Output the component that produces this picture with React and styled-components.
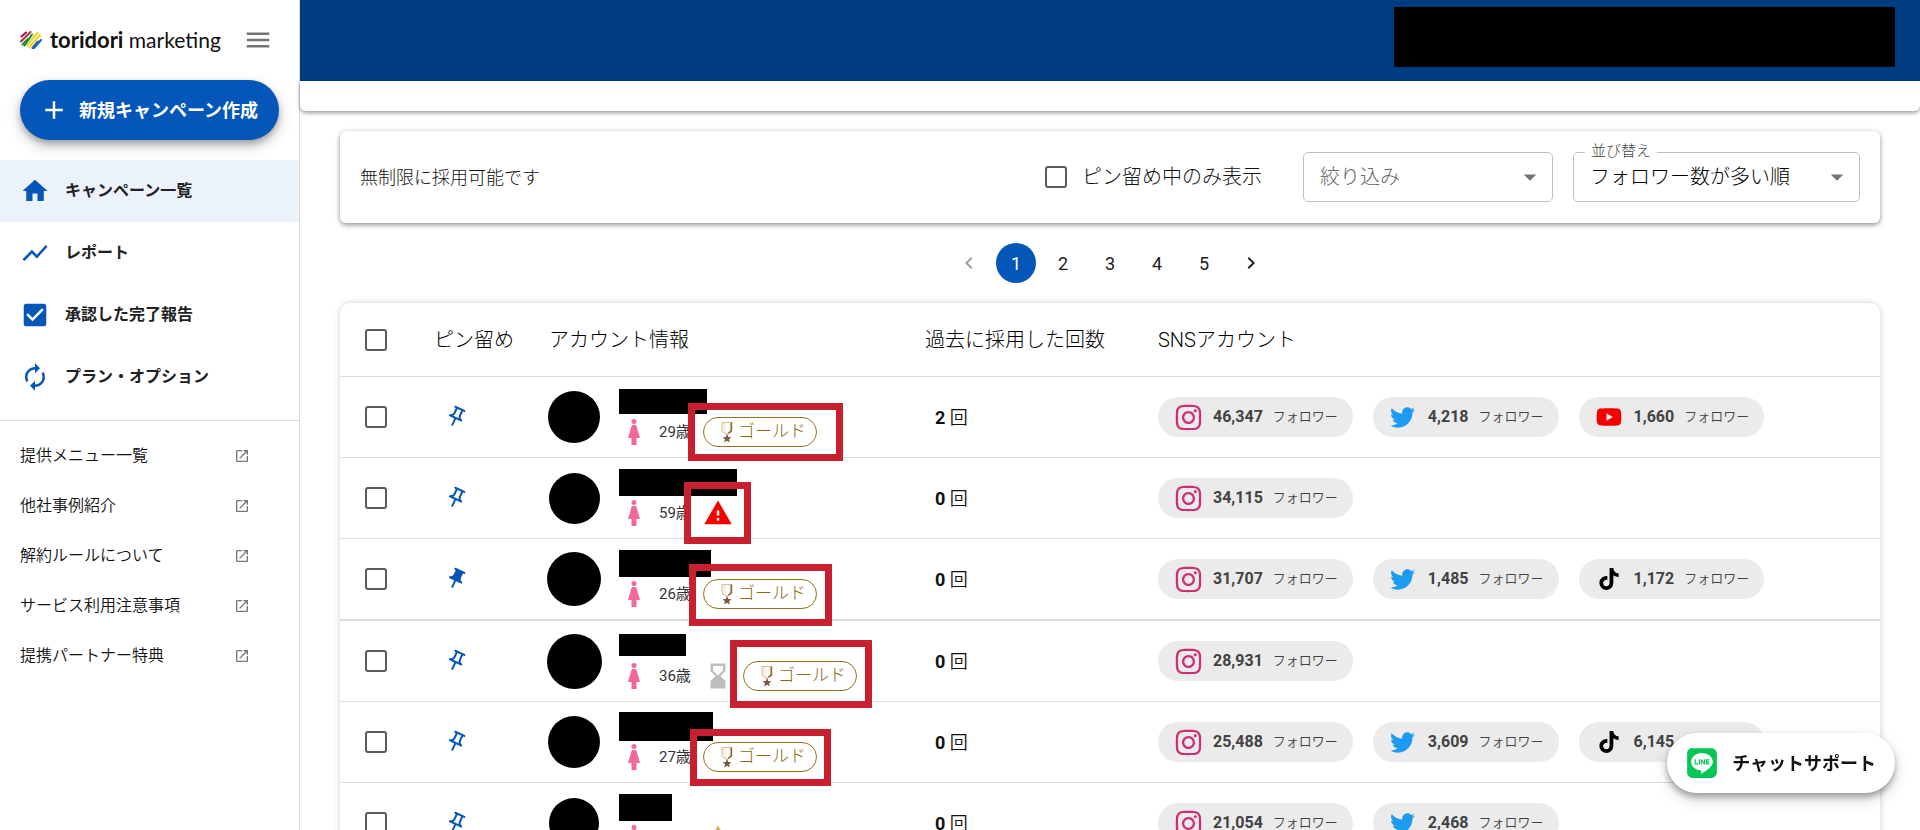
import React, { useState } from 'react'
import styled, { createGlobalStyle } from 'styled-components'
import {
  MdMenu, MdAdd, MdHome, MdShowChart, MdCheckBox, MdAutorenew, MdOpenInNew,
  MdChevronLeft, MdChevronRight, MdArrowDropDown, MdOutlinePushPin, MdPushPin,
  MdWarning, MdHourglassBottom
} from 'react-icons/md'
import { FaInstagram, FaTwitter, FaYoutube, FaTiktok, FaLine } from 'react-icons/fa'

const GlobalStyle = createGlobalStyle`
  * {
    box-sizing: border-box;
  }
  body {
    margin: 0;
    background: #fff;
    color: #111;
    font-family: Roboto, 'Noto Sans CJK JP', sans-serif;
    font-size: 16px;
    line-height: 1.5;
    overflow: hidden;
  }
  button, input, select {
    font-family: inherit;
    color: inherit;
  }
  button {
    line-height: inherit;
  }
  svg {
    flex-shrink: 0;
  }
`

const Layout = styled.div`
  display: flex;
  height: 100vh;
`

const Sidebar = styled.aside`
  width: 300px;
  flex-shrink: 0;
  border-right: 1px solid #dcdcdc;
`

const Brand = styled.div`
  display: flex;
  align-items: center;
  height: 80px;
  padding: 0 26px 0 20px;
`

const Logo = styled.a`
  display: flex;
  align-items: center;
  gap: 8px;
  flex: 1;
  color: #111;
  font-family: Lato, sans-serif;
  font-size: 21px;
  line-height: 24px;
  text-decoration: none;
  white-space: nowrap;

  b {
    font-size: 22px;
  }
`

const IconButton = styled.button`
  display: flex;
  padding: 0;
  border: 0;
  background: none;
  color: ${props => props.color || '#757575'};
  cursor: pointer;
`

const CreateButton = styled.button`
  display: flex;
  align-items: center;
  gap: 10px;
  width: 259px;
  height: 60px;
  margin: 0 20px 20px;
  padding: 0 19px;
  border: 0;
  border-radius: 30px;
  background: #0456b9;
  box-shadow: 0 4px 6px rgba(0, 0, 0, 0.25), 0 6px 16px rgba(0, 0, 0, 0.18);
  color: #fff;
  font-size: 18px;
  font-weight: 700;
  white-space: nowrap;
`

const Nav = styled.nav`
  border-bottom: 1px solid #dcdcdc;
  padding-bottom: 12px;
`

const NavItem = styled.a`
  display: flex;
  align-items: center;
  gap: 15px;
  height: 62px;
  padding: 0 20px;
  background: ${props => (props.$active ? '#ebf2fa' : 'none')};
  color: #212121;
  font-weight: 700;
  text-decoration: none;

  svg {
    color: #0456b9;
  }
`

const SubNav = styled.nav`
  padding-top: 10px;
`

const SubLink = styled.a`
  display: flex;
  align-items: center;
  justify-content: space-between;
  height: 50px;
  padding: 0 49px 0 20px;
  color: #111;
  font-weight: 350;
  text-decoration: none;

  svg {
    color: #757575;
  }
`

const Content = styled.div`
  flex: 1;
  min-width: 0;
`

const TopBar = styled.header`
  display: flex;
  justify-content: flex-end;
  align-items: flex-start;
  height: 81px;
  padding: 7px 25px;
  background: #003d80;
`

const Redacted = styled.div`
  width: ${props => props.$width}px;
  height: ${props => props.$height}px;
  background: #000;
`

const SubBar = styled.div`
  height: 30px;
  border-radius: 0 0 6px 6px;
  box-shadow: 0 2px 4px rgba(0, 0, 0, 0.4);
`

const Main = styled.main`
  padding: 20px 40px 0;
`

const FilterCard = styled.section`
  display: flex;
  align-items: center;
  height: 92px;
  padding: 0 20px;
  border-radius: 6px;
  background: #fff;
  box-shadow: 0 2px 5px rgba(0, 0, 0, 0.4), 0 0 6px rgba(0, 0, 0, 0.06);
  font-weight: 300;
`

const Notice = styled.p`
  flex: 1;
  margin: 0;
  font-size: 18px;
`

const CheckLabel = styled.label`
  display: flex;
  align-items: center;
  gap: 15px;
  margin-right: 41px;
  font-size: 20px;
`

const Checkbox = styled.input.attrs({ type: 'checkbox' })`
  appearance: none;
  display: block;
  width: 22px;
  height: 22px;
  margin: 0;
  border: 2px solid #5c5c5c;
  border-radius: 3px;
`

const Field = styled.div`
  position: relative;
  display: flex;
  align-items: center;
  width: ${props => props.$width}px;
  margin-left: ${props => (props.$spaced ? 20 : 0)}px;

  svg {
    position: absolute;
    right: 8px;
    color: #757575;
    pointer-events: none;
  }
`

const FieldLabel = styled.label`
  position: absolute;
  top: -12px;
  left: 12px;
  padding: 0 6px;
  background: #fff;
  color: #444;
  font-size: 15px;
  line-height: 22px;
`

const Select = styled.select`
  appearance: none;
  width: 100%;
  height: 50px;
  padding: 0 16px;
  border: 1px solid #c0c0c0;
  border-radius: 5px;
  background: #fff;
  color: ${props => (props.$muted ? '#666' : '#000')};
  font-size: 20px;
  font-weight: 300;
`

const Pager = styled.nav`
  display: flex;
  justify-content: center;
  gap: 7px;
  padding: 20px 0;
`

const PageButton = styled.button`
  display: flex;
  align-items: center;
  justify-content: center;
  width: 40px;
  height: 40px;
  padding: 0;
  border: 0;
  border-radius: 50%;
  background: ${props => (props.$active ? '#0456b9' : 'none')};
  color: ${props => (props.$active ? '#fff' : '#212121')};
  font-size: 18px;

  &:disabled {
    color: #9e9e9e;
  }
`

const TableCard = styled.section`
  border-radius: 10px 10px 0 0;
  background: #fff;
  box-shadow: 0 0 6px rgba(0, 0, 0, 0.2);
`

const Table = styled.table`
  width: 100%;
  border-collapse: separate;
  border-spacing: 0;
  table-layout: fixed;
`

const Th = styled.th`
  height: 74px;
  width: ${props => (props.$width ? props.$width + 'px' : 'auto')};
  padding: 0 0 0 ${props => props.$pad || 0}px;
  border-bottom: 1px solid #dcdcdc;
  color: #000;
  font-size: 20px;
  font-weight: 300;
  text-align: left;
  white-space: nowrap;
`

const Row = styled.tr`
  td {
    border-bottom: ${props => (props.$divider ? 2 : 1)}px solid #dcdcdc;
  }
`

const Td = styled.td`
  padding: 0 0 0 ${props => props.$pad || 0}px;
`

const Account = styled.div`
  position: relative;
  display: flex;
  align-items: center;
  height: 80px;
`

const AvatarSlot = styled.div`
  display: flex;
  justify-content: center;
  width: 60px;
  margin-right: 15px;
`

const Avatar = styled.div`
  width: ${props => props.$size}px;
  height: ${props => props.$size}px;
  border-radius: 50%;
  background: #000;
`

const NameLine = styled.div`
  display: flex;
  align-items: center;
  height: 28px;
  margin-bottom: 2px;
`

const Meta = styled.div`
  display: flex;
  align-items: center;
  gap: 10px;
  height: 30px;
`

const Gender = styled.span`
  display: flex;
  justify-content: center;
  width: 30px;
`

const Age = styled.span`
  width: 34px;
  color: #333;
  font-size: 15px;
  white-space: nowrap;
`

const GoldBadge = styled.span`
  display: flex;
  align-items: center;
  gap: 5px;
  height: 30px;
  padding: 0 10px 0 17px;
  border: 1px solid #94701a;
  border-radius: 15px;
  color: #8a6610;
  font-size: 17px;
  font-weight: 300;
  white-space: nowrap;
`

/* red marker drawn over the status icons */
const Marker = styled.span`
  position: absolute;
  top: ${props => props.$top}px;
  left: ${props => props.$left}px;
  width: ${props => props.$width}px;
  height: ${props => props.$height}px;
  border: 7px solid #c8202f;
  z-index: 1;
`

const Count = styled.span`
  font-size: 18px;
  font-weight: 350;

  b {
    font-weight: 700;
  }
`

const Chips = styled.div`
  display: flex;
  gap: 20px;
`

const Chip = styled.span`
  display: flex;
  align-items: center;
  gap: 10px;
  height: 40px;
  padding: 0 15px;
  border-radius: 20px;
  background: #ebebeb;
  color: #424242;
  font-size: 13px;
  font-weight: 350;
  white-space: nowrap;

  b {
    font-size: 16px;
    font-weight: 700;
  }
`

const ChipIcon = styled.span`
  display: flex;
  justify-content: center;
  width: 30px;
  color: ${props => props.color};
`

const ChatButton = styled.button`
  position: fixed;
  right: 25px;
  bottom: 37px;
  z-index: 2;
  display: flex;
  align-items: center;
  gap: 13px;
  height: 60px;
  padding: 0 19px 0 18px;
  border: 0;
  border-radius: 30px;
  background: #fff;
  box-shadow: 0 4px 6px rgba(0, 0, 0, 0.3), 0 6px 16px rgba(0, 0, 0, 0.16);
  font-size: 18px;
  font-weight: 700;
  white-space: nowrap;
`

const LogoMark = () => (
  <svg width="22" height="20" viewBox="0 0 22 20" fill="none" strokeWidth="2.1" strokeLinecap="round">
    <path d="M1.500 6.500L6 2.500" stroke="#a3195b" />
    <path d="M1 11.500L10.500 2" stroke="#b5304a" />
    <path d="M2.500 14.500L8 9" stroke="#118a4a" />
    <path d="M4.500 15.500L12 4.500" stroke="#118a4a" />
    <path d="M7 15.500L17.500 2.500" stroke="#f3d31b" />
    <path d="M9.500 17L20 5" stroke="#f3d31b" />
    <path d="M12.500 18L18 11.500" stroke="#1c62b7" />
    <path d="M14 18L21 10" stroke="#1c62b7" />
  </svg>
)

const Woman = () => (
  <svg width="12" height="26" viewBox="0 0 12 26" fill="#f4679a">
    <circle cx="6" cy="2.500" r="2.500" />
    <path d="M4.700 6h2.600c.6 0 1 .4 1.200 1L12 19H8.500v7h-5v-7H0L3.500 7c.2-.6.6-1 1.200-1z" />
  </svg>
)

const Medal = () => (
  <svg width="12" height="21" viewBox="0 0 12 21">
    <path d="M1 .5h10v9L7 12H5L1 9.500z" fill="#f8efe2" stroke="#d9bf9c" />
    <path d="M5 1h3v10H5z" fill="#fff" />
    <path d="M9.500 .5H11v9L7 12v-1.500l2.500-2z" fill="#8f6a3c" />
    <path d="M6 11.500l1.200 3.500 3.300.2-2.500 2.100.9 3.200L6 18.700l-2.900 1.800.9-3.200-2.500-2.100 3.300-.2z" fill="#80583f" />
  </svg>
)

const mainNav = [
  { label: 'キャンペーン一覧', Icon: MdHome, active: true },
  { label: 'レポート', Icon: MdShowChart },
  { label: '承認した完了報告', Icon: MdCheckBox },
  { label: 'プラン・オプション', Icon: MdAutorenew }
]

const subNav = [
  '提供メニュー一覧',
  '他社事例紹介',
  '解約ルールについて',
  'サービス利用注意事項',
  '提携パートナー特典'
]

const sns = {
  instagram: { Icon: FaInstagram, color: '#cf2e72', size: 29 },
  twitter: { Icon: FaTwitter, color: '#1d9bf0', size: 25 },
  youtube: { Icon: FaYoutube, color: '#f60000', size: 26 },
  tiktok: { Icon: FaTiktok, color: '#000', size: 22 }
}

const accounts = [
  {
    avatar: 52, mask: [88, 25], age: 29, status: ['gold'], count: 2,
    marker: { top: 26, left: 144, width: 155, height: 58 },
    sns: [['instagram', '46,347'], ['twitter', '4,218'], ['youtube', '1,660']]
  },
  {
    avatar: 51, mask: [118, 27], age: 59, status: ['warning'], count: 0,
    marker: { top: 24, left: 140, width: 67, height: 62 },
    sns: [['instagram', '34,115']]
  },
  {
    avatar: 54, mask: [92, 27], age: 26, status: ['gold'], count: 0, pinned: true, divider: true,
    marker: { top: 25, left: 145, width: 143, height: 62 },
    sns: [['instagram', '31,707'], ['twitter', '1,485'], ['tiktok', '1,172']]
  },
  {
    avatar: 55, mask: [67, 22], age: 36, status: ['waiting', 'gold'], count: 0,
    marker: { top: 19, left: 186, width: 142, height: 68 },
    sns: [['instagram', '28,931']]
  },
  {
    avatar: 52, mask: [94, 29], age: 27, status: ['gold'], count: 0,
    marker: { top: 27, left: 146, width: 141, height: 57 },
    sns: [['instagram', '25,488'], ['twitter', '3,609'], ['tiktok', '6,145']]
  },
  {
    avatar: 50, mask: [53, 27], status: ['caution'], count: 0,
    sns: [['instagram', '21,054'], ['twitter', '2,468']]
  }
]

const Status = ({ type }) => {
  if (type === 'warning') return <MdWarning size={30} color="#f60000" />
  if (type === 'caution') return <MdWarning size={30} color="#e0b040" />
  if (type === 'waiting') return <MdHourglassBottom size={30} color="#bdbdbd" />
  return <GoldBadge><Medal />ゴールド</GoldBadge>
}

const AccountRow = ({ account }) => {
  const [pinned, setPinned] = useState(Boolean(account.pinned))
  const Pin = pinned ? MdPushPin : MdOutlinePushPin

  return (
    <Row $divider={account.divider}>
      <Td $pad={25}><Checkbox aria-label="選択" /></Td>
      <Td $pad={10}>
        <IconButton color="#0456b9" aria-label="ピン留め" onClick={() => setPinned(!pinned)}>
          <Pin size={24} transform="rotate(25)" />
        </IconButton>
      </Td>
      <Td>
        <Account>
          <AvatarSlot><Avatar $size={account.avatar} /></AvatarSlot>
          <div>
            <NameLine><Redacted $width={account.mask[0]} $height={account.mask[1]} /></NameLine>
            <Meta>
              <Gender><Woman /></Gender>
              <Age>{account.age && `${account.age}歳`}</Age>
              {account.status.map(type => <Status key={type} type={type} />)}
            </Meta>
          </div>
          {account.marker && (
            <Marker
              $top={account.marker.top}
              $left={account.marker.left}
              $width={account.marker.width}
              $height={account.marker.height}
            />
          )}
        </Account>
      </Td>
      <Td $pad={10}><Count><b>{account.count}</b> 回</Count></Td>
      <Td>
        <Chips>
          {account.sns.map(([name, followers]) => {
            const { Icon, color, size } = sns[name]
            return (
              <Chip key={name}>
                <ChipIcon color={color}><Icon size={size} /></ChipIcon>
                <b>{followers}</b>
                <span>フォロワー</span>
              </Chip>
            )
          })}
        </Chips>
      </Td>
    </Row>
  )
}

const App = () => {
  const [page, setPage] = useState(1)

  return (
    <Layout>
      <GlobalStyle />
      <Sidebar>
        <Brand>
          <Logo href="#">
            <LogoMark />
            <span><b>toridori</b> marketing</span>
          </Logo>
          <IconButton aria-label="メニュー"><MdMenu size={30} /></IconButton>
        </Brand>
        <CreateButton><MdAdd size={30} />新規キャンペーン作成</CreateButton>
        <Nav>
          {mainNav.map(({ label, Icon, active }) => (
            <NavItem key={label} href="#" $active={active}><Icon size={30} />{label}</NavItem>
          ))}
        </Nav>
        <SubNav>
          {subNav.map(label => (
            <SubLink key={label} href="#">{label}<MdOpenInNew size={16} /></SubLink>
          ))}
        </SubNav>
      </Sidebar>

      <Content>
        <TopBar><Redacted $width={501} $height={60} /></TopBar>
        <SubBar />
        <Main>
          <FilterCard>
            <Notice>無制限に採用可能です</Notice>
            <CheckLabel><Checkbox />ピン留め中のみ表示</CheckLabel>
            <Field $width={250}>
              <Select $muted aria-label="絞り込み"><option>絞り込み</option></Select>
              <MdArrowDropDown size={30} />
            </Field>
            <Field $width={287} $spaced>
              <FieldLabel htmlFor="sort">並び替え</FieldLabel>
              <Select id="sort"><option>フォロワー数が多い順</option></Select>
              <MdArrowDropDown size={30} />
            </Field>
          </FilterCard>

          <Pager>
            <PageButton disabled aria-label="前へ"><MdChevronLeft size={24} /></PageButton>
            {[1, 2, 3, 4, 5].map(n => (
              <PageButton key={n} $active={n === page} onClick={() => setPage(n)}>{n}</PageButton>
            ))}
            <PageButton aria-label="次へ"><MdChevronRight size={24} /></PageButton>
          </Pager>

          <TableCard>
            <Table>
              <thead>
                <tr>
                  <Th $width={94} $pad={25}><Checkbox aria-label="すべて選択" /></Th>
                  <Th $width={110}>ピン留め</Th>
                  <Th $width={381} $pad={5}>アカウント情報</Th>
                  <Th $width={233}>過去に採用した回数</Th>
                  <Th>SNSアカウント</Th>
                </tr>
              </thead>
              <tbody>
                {accounts.map((account, i) => <AccountRow key={i} account={account} />)}
              </tbody>
            </Table>
          </TableCard>
        </Main>
      </Content>

      <ChatButton><FaLine size={34} color="#06c755" />チャットサポート</ChatButton>
    </Layout>
  )
}

export default App
